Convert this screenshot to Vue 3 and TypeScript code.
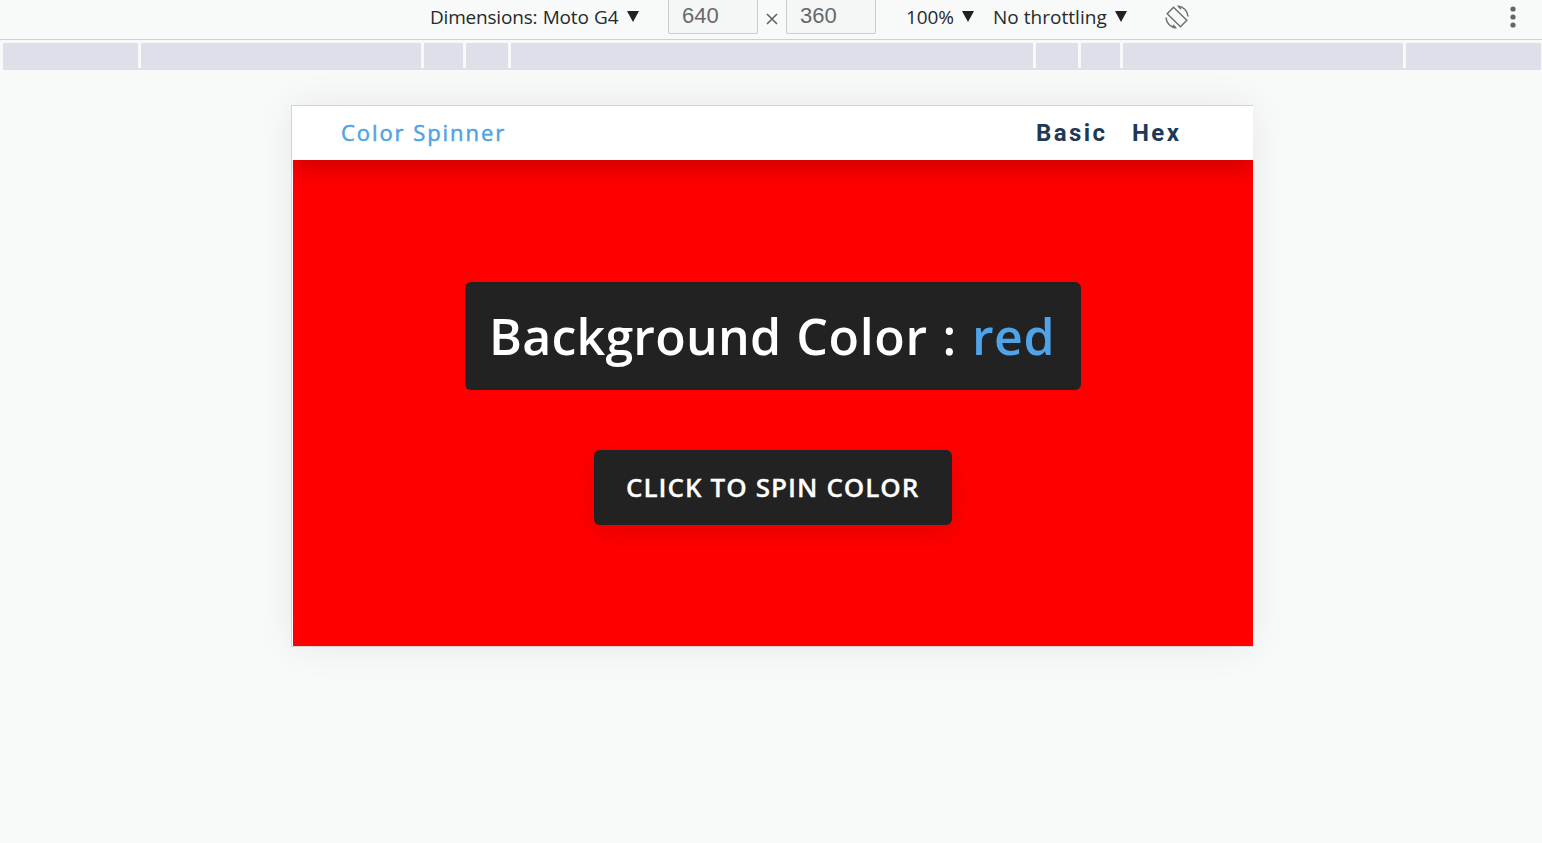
<script setup lang="ts">
import { ref } from 'vue'

const colors = ['red', 'green', 'blue', 'orange']
const index = ref(0)
const spin = () => {
  index.value = (index.value + 1) % colors.length
}

// Widths of the device-size ruler segments, left to right
const segments: number[] = [135, 280, 39, 42, 522, 42, 39, 280, 135]
</script>

<template>
  <div class="devtools">
    <header class="toolbar">
      <div class="select device"><span class="label">Dimensions: Moto G4</span><i class="caret"></i></div>
      <div class="size">640</div>
      <svg class="times" viewBox="0 0 12 12"><path d="M1 1L11 11M11 1L1 11" /></svg>
      <div class="size">360</div>
      <div class="select scale"><span class="label">100%</span><i class="caret"></i></div>
      <div class="select throttle"><span class="label">No throttling</span><i class="caret"></i></div>
      <svg class="rotate" viewBox="0 0 24 24">
        <path class="body" d="M8.5 2.2L21.8 15.2L15.5 21.8L2.2 8.8Z" />
        <path d="M12.5 1A11 11 0 0 1 23 11.5M13 1L16 4M11.5 23A11 11 0 0 1 1 12.5M11 23L8 20" />
      </svg>
      <svg class="more" viewBox="0 0 6 22">
        <circle cx="3" cy="3" r="2.6" /><circle cx="3" cy="11" r="2.6" /><circle cx="3" cy="19" r="2.6" />
      </svg>
    </header>
    <div class="ruler">
      <span v-for="(w, i) in segments" :key="i" class="segment" :style="{ width: w + 'px' }"></span>
    </div>
    <main class="device-frame">
      <nav class="nav">
        <span class="brand">Color Spinner</span>
        <a class="link basic">Basic</a>
        <a class="link hex">Hex</a>
      </nav>
      <section class="stage" :style="{ backgroundColor: colors[index] }">
        <h2 class="title"><span class="lead">Background</span> Color : <span class="value">{{ colors[index] }}</span></h2>
        <button class="spin" @click="spin">Click to spin color</button>
      </section>
    </main>
  </div>
</template>

<style>
body {
  background: #f8faf9;
  overflow: hidden;
}
</style>

<style scoped>
.devtools {
  box-sizing: border-box;
  width: 1542px;
  height: 843px;
  background: #f8faf9;
  overflow: hidden;
}
.toolbar {
  box-sizing: border-box;
  display: flex;
  align-items: flex-start;
  height: 40px;
  padding-left: 430px;
  border-bottom: 1px solid #cdd1d0;
  font-family: "Open Sans", "Noto Sans", sans-serif;
  font-size: 19px;
  color: #27292b;
}
.select {
  display: flex;
  align-items: flex-start;
  justify-content: space-between;
  height: 34px;
  line-height: 34px;
  white-space: nowrap;
}
.device { width: 209px; margin-right: 29px; letter-spacing: -0.2px; word-spacing: 0.7px; }
.scale { width: 68px; margin-left: 30px; letter-spacing: -0.1px; }
.throttle { width: 134px; margin-left: 19px; letter-spacing: 0.03px; }
.caret {
  margin-top: 11px;
  border: solid transparent;
  border-width: 11px 6.5px 0;
  border-top-color: #202124;
}
.size {
  box-sizing: border-box;
  width: 90px;
  height: 34px;
  padding-left: 13px;
  border: 1px solid #ccc;
  border-top: 0;
  border-radius: 0 0 2px 2px;
  background: #f5f6f6;
  color: #66696c;
  font: 22px/31px "Liberation Sans", sans-serif;
}
.times {
  width: 12px;
  height: 12px;
  margin: 13px 8px 0;
  stroke: #5f6368;
  stroke-width: 1.6;
}
.rotate {
  width: 24px;
  height: 24px;
  margin: 5px 0 0 38px;
  fill: none;
  stroke: #6e7173;
  stroke-width: 1.5;
}
.more {
  width: 6px;
  height: 22px;
  margin: 6px 26px 0 auto;
  fill: #636567;
}
.ruler {
  box-sizing: border-box;
  display: flex;
  gap: 3px;
  width: 1538px;
  height: 27px;
  margin: 3px 0 0 3px;
  border-bottom: 2px solid #dde0e8;
}
.segment {
  flex: none;
  background: #dde0e8;
}
.device-frame {
  box-sizing: border-box;
  width: 962px;
  height: 542px;
  margin: 35px 0 0 291px;
  border: solid #d0d4d5;
  border-width: 1px 0 1px 1px;
  background: #fff;
  box-shadow: 0 0 36px rgba(0, 0, 0, 0.07);
}
.nav {
  position: relative;
  display: flex;
  align-items: center;
  height: 54px;
  padding-left: 49px;
  background: #fff;
  box-shadow: 0 8px 24px rgba(0, 0, 0, 0.2);
  clip-path: inset(0 0 -40px 0);
}
.brand {
  width: 695px;
  height: 54px;
  color: #4fa3e3;
  font: 500 22px/53px "Open Sans", sans-serif;
  letter-spacing: 1.93px;
  -webkit-text-stroke: 0.5px #4fa3e3;
}
.link {
  color: #1c3a57;
  font: 700 24px/54px Roboto, sans-serif;
  letter-spacing: 2.4px;
}
.basic { width: 96px; }
.stage {
  display: flex;
  flex-direction: column;
  align-items: center;
  box-sizing: border-box;
  height: 486px;
  margin-left: 1px;
  padding-top: 122px;
}
.title {
  box-sizing: border-box;
  width: 616px;
  height: 108px;
  margin: 0 0 60px;
  padding-left: 24px;
  border-radius: 6px;
  background: #222;
  color: #fff;
  font: 600 50px/108px "Open Sans", sans-serif;
  letter-spacing: 0.64px;
  word-spacing: 1.3px;
  white-space: nowrap;
}
.lead { letter-spacing: 0.24px; }
.value { color: #4fa3e8; }
.spin {
  box-sizing: border-box;
  width: 358px;
  height: 75px;
  padding: 0 0 0 32px;
  border: 0;
  border-radius: 6px;
  background: #222;
  box-shadow: 0 8px 24px rgba(0, 0, 0, 0.11);
  color: #fff;
  font: 600 26px/75px "Open Sans", sans-serif;
  letter-spacing: 0.97px;
  word-spacing: 0.4px;
  text-align: left;
  text-transform: uppercase;
  white-space: nowrap;
  -webkit-text-stroke: 0.3px #fff;
}
</style>
